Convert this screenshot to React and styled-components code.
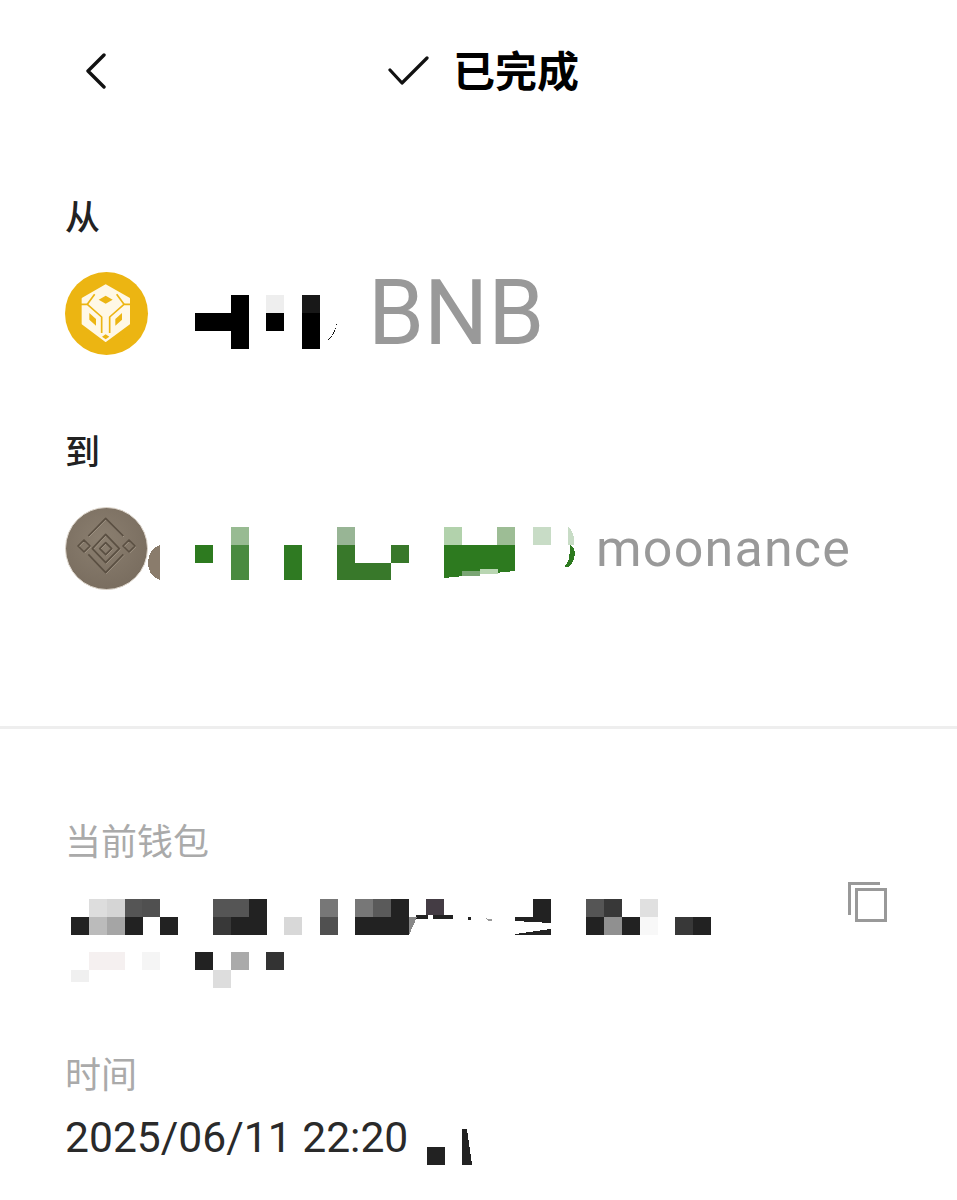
import React from 'react';
import styled, { createGlobalStyle } from 'styled-components';

const CJK = '"Roboto", "Noto Sans CJK SC", sans-serif';

const GlobalStyle = createGlobalStyle`
  html, body {
    margin: 0;
    padding: 0;
    background: #fff;
    font-family: ${CJK};
  }
`;

const Page = styled.div`
  width: 957px;
  height: 1200px;
  overflow: hidden;
  background: #fff;
`;

const Header = styled.header`
  display: flex;
  align-items: center;
  height: 34px;
  padding: 54px 0 0 85px;
`;

const Title = styled.div`
  display: flex;
  align-items: center;
  gap: 24px;
  margin-left: 281px;
  font-size: 42px;
  line-height: 50px;
  font-weight: 700;
  color: #000;
`;

const TitleText = styled.span`
  margin-top: 4px;
`;

const TopSection = styled.section`
  padding: 106px 0 0 65px;
  height: 638px;
  box-sizing: border-box;
`;

const Label = styled.div`
  font-size: 35px;
  line-height: 50px;
  font-weight: 500;
  color: #222;
`;

const Party = styled.div`
  display: flex;
  align-items: center;
  height: 84px;
  margin-top: ${p => p.$top}px;
  margin-bottom: ${p => p.$bottom}px;
`;

const Name = styled.span`
  font-size: ${p => p.$size}px;
  letter-spacing: ${p => p.$spacing || 0}px;
  color: #999;
  margin-left: ${p => p.$gap}px;
  line-height: 1;
`;

const Divider = styled.hr`
  margin: 0;
  border: 0;
  height: 3px;
  background: #eeeeee;
`;

const Details = styled.section`
  padding: 89px 0 0 65px;
`;

const MutedLabel = styled.div`
  font-size: 36px;
  line-height: 50px;
  color: #aaa;
`;

const WalletRow = styled.div`
  display: flex;
  align-items: flex-start;
  margin-top: 31px;
  height: 152px;
`;

const Copy = styled.svg`
  margin: -18px 0 0 136px;
  flex: none;
`;

const TimeRow = styled.div`
  display: flex;
  align-items: center;
  height: 50px;
  margin-top: 11px;
  font-size: 42.6px;
  color: #2a2a2a;
`;

const Mosaic = styled.svg`
  display: block;
  flex: none;
  margin-left: ${p => p.$left || 0}px;
  margin-top: ${p => p.$top || 0}px;
`;

const Avatar = styled.svg`
  display: block;
  flex: none;
`;

const fromCells = [
  [195, 313, 36, 18, '#000'],
  [231, 295, 18, 54, '#000'],
  [266, 295, 18, 18, '#eee'],
  [266, 313, 18, 18, '#000'],
  [302, 295, 18, 18, '#181818'],
  [302, 313, 18, 36, '#000'],
];

const toCells = [
  [195, 544, 18, 18, '#2d7a1f'],
  [231, 526, 18, 18, '#98bb92'],
  [231, 544, 18, 35, '#4a8a40'],
  [284, 544, 18, 35, '#2f7a22'],
  [337, 526, 18, 18, '#98b595'],
  [337, 544, 18, 18, '#38782a'],
  [337, 562, 54, 17, '#38782a'],
  [391, 544, 18, 18, '#38782a'],
  [444, 526, 18, 18, '#b2d2ac'],
  [497, 526, 18, 18, '#9dbd95'],
  [444, 544, 71, 18, '#2d7a1f'],
  [533, 526, 18, 18, '#c8dcc6'],
];

const walletCells = [
  [89, 899, 18, 18, '#ddd'], [107, 899, 18, 18, '#d5d5d5'], [125, 899, 18, 18, '#555'], [142, 899, 18, 18, '#505050'],
  [71, 917, 18, 18, '#222'], [89, 917, 18, 18, '#bbb'], [107, 917, 18, 18, '#a5a5a5'], [125, 917, 18, 18, '#222'], [160, 917, 18, 18, '#222'],
  [213, 899, 36, 18, '#555'], [249, 899, 18, 18, '#222'], [213, 917, 18, 18, '#383838'], [231, 917, 36, 18, '#222'],
  [284, 917, 18, 18, '#d8d8d8'],
  [320, 899, 18, 18, '#777'], [320, 917, 18, 18, '#505050'],
  [355, 899, 18, 18, '#777'], [373, 899, 18, 18, '#5a5a5a'], [391, 899, 18, 18, '#222'], [355, 917, 54, 18, '#222'],
  [426, 899, 18, 16, '#443c44'], [416, 915, 12, 4, '#222'], [433, 915, 20, 4, '#222'], [468, 917, 3, 3, '#222'],
  [533, 899, 18, 18, '#222'],
  [586, 899, 18, 18, '#555'], [604, 899, 18, 18, '#383838'], [640, 899, 18, 18, '#e0e0e0'],
  [586, 917, 18, 18, '#222'], [604, 917, 18, 18, '#909090'], [622, 917, 18, 18, '#222'], [640, 917, 18, 18, '#f8f8f8'],
  [675, 917, 18, 18, '#383838'], [693, 917, 18, 18, '#222'],
  [89, 952, 36, 18, '#f5f0f0'], [71, 970, 18, 12, '#f0f0f0'], [142, 952, 18, 18, '#f5f5f5'],
  [195, 952, 18, 18, '#222'], [231, 952, 18, 18, '#aaa'], [266, 952, 18, 18, '#333'], [213, 970, 18, 18, '#ddd'],
];

// cells are kept in page coordinates, the box only shifts them back to its own origin
const MosaicBlock = ({ x, y, w, h, cells, left, top, children }) => (
  <Mosaic $left={left} $top={top} width={w} height={h} viewBox={`${x} ${y} ${w} ${h}`} shapeRendering="crispEdges">
    {cells.map(([cx, cy, cw, ch, fill]) => (
      <rect key={`${cx}-${cy}`} x={cx} y={cy} width={cw} height={ch} fill={fill} />
    ))}
    {children}
  </Mosaic>
);

const BackIcon = () => (
  <svg width="22" height="36" viewBox="0 0 22 36" fill="none" stroke="#111" strokeWidth="3.4" strokeLinecap="round" strokeLinejoin="round">
    <path d="M19 2 3 18l16 16" />
  </svg>
);

const CheckIcon = () => (
  <svg width="41" height="30" viewBox="0 0 41 30" fill="none" stroke="#111" strokeWidth="3.2" strokeLinecap="round" strokeLinejoin="round">
    <path d="M2 14 14 27 39 2" />
  </svg>
);

const CopyIcon = () => (
  <Copy width="46" height="46" viewBox="0 0 46 46" fill="none" stroke="#999" strokeWidth="3">
    <rect x="9.5" y="8.5" width="29" height="31" />
    <path d="M2.5 34V2.5H33" />
  </Copy>
);

// drawn in the 3x coordinates of the zoomed crop
const BnbIcon = () => (
  <Avatar width="84" height="84" viewBox="15 15 252 252">
    <circle cx="139.5" cy="139.5" r="124.5" fill="#ecb512" />
    <path d="M137 55 207 95V170L137 222 68 170V95z" fill="#fff8e6" strokeLinejoin="round" stroke="#fff8e6" strokeWidth="6" />
    <g fill="none" stroke="#ecb512" strokeWidth="5" strokeLinejoin="round">
      <path d="M62 112 82 112 125 150V198M212 112 192 112 149 150V198" />
      <path d="M82 112 104 82M192 112 170 82" />
    </g>
    <g fill="#ecb512">
      <path d="M137 86 158 98 137 110 116 98z" />
      <path d="M88 138 108 156V176L88 158z" />
      <path d="M186 138 166 156V176L186 158z" />
      <path d="M137 202 148 209 137 217 126 209z" />
      <path d="M62 176 108 212 84 214zM212 176 166 212 190 214z" />
    </g>
  </Avatar>
);

const CoinIcon = () => (
  <Avatar width="84" height="84" viewBox="15 18 252 252">
    <defs>
      <radialGradient id="coin" cx="45%" cy="40%" r="65%">
        <stop offset="0" stopColor="#8b7f70" />
        <stop offset="1" stopColor="#786c5e" />
      </radialGradient>
    </defs>
    <circle cx="139.5" cy="142.5" r="123" fill="url(#coin)" stroke="#ddd6cc" strokeWidth="3" />
    <g fill="none" strokeLinejoin="round" stroke="#a69a8a" strokeWidth="3" transform="translate(2 3)">
      <path d="M85 105 137 52 190 105M85 160 137 215 190 160" />
      <path d="M137 100 178 143 137 185 97 143z" />
      <path d="M137 125 155 143 137 161 119 143z" />
      <path d="M72 117 90 135 72 153 54 135zM207 117 225 135 207 153 189 135z" />
    </g>
    <g fill="none" strokeLinejoin="round" stroke="#5a4f42" strokeWidth="5">
      <path d="M85 105 137 52 190 105M85 160 137 215 190 160" />
      <path d="M137 100 178 143 137 185 97 143z" />
      <path d="M137 125 155 143 137 161 119 143z" />
      <path d="M72 117 90 135 72 153 54 135zM207 117 225 135 207 153 189 135z" />
    </g>
  </Avatar>
);

export default function App() {
  return (
    <Page>
      <GlobalStyle />
      <Header>
        <BackIcon />
        <Title>
          <CheckIcon />
          <TitleText>已完成</TitleText>
        </Title>
      </Header>

      <TopSection>
        <Label>从</Label>
        <Party $top={28} $bottom={73}>
          <BnbIcon />
          <MosaicBlock x={195} y={295} w={145} h={54} left={46} top={16} cells={fromCells}>
            <path d="M337 322c-1 6-4 13-9 18 5-3 8-9 9-18z" fill="#111" />
          </MosaicBlock>
          <Name $size={90} $gap={28}>BNB</Name>
        </Party>
        <Label>到</Label>
        <Party $top={28} $bottom={0}>
          <CoinIcon />
          <MosaicBlock x={148} y={526} w={432} h={54} left={-1} top={10} cells={toCells}>
            <path d="M148 562c0-9 4-16 12-18v35c-8-2-12-9-12-17z" fill="#8a7c6c" />
            <path d="M444 562h71v8l-71 7z" fill="#2d7a1f" />
            <path d="M462 570h18v5h-18z" fill="#7aa574" />
            <path d="M480 568h18v5h-18z" fill="#b9d6b2" />
            <path d="M568 526c5 3 7 10 6 18h-6z" fill="#c8dcc6" />
            <path d="M570 544c6 2 7 14-1 22-2 1-4 0-5-1 4-1 6-9 6-21z" fill="#2d7a1f" />
          </MosaicBlock>
          <Name $size={52} $spacing={1.2} $gap={16}>moonance</Name>
        </Party>
      </TopSection>

      <Divider />

      <Details>
        <MutedLabel>当前钱包</MutedLabel>
        <WalletRow>
          <MosaicBlock x={71} y={899} w={640} h={90} left={6} cells={walletCells}>
            <path d="M409 917h8l-8 18z" fill="#888" />
            <path d="M515 917h36v6l-36-2z" fill="#222" />
            <path d="M515 934l36-5v6h-36z" fill="#222" />
            <path d="M485 918l9 2-5 1z" fill="#999" />
          </MosaicBlock>
          <CopyIcon />
        </WalletRow>
        <MutedLabel>时间</MutedLabel>
        <TimeRow>
          2025/06/11 22:20
          <MosaicBlock x={427} y={1130} w={46} h={36} left={19} top={20} cells={[[427, 1148, 18, 18, '#222']]}>
            <path d="M462 1166h10l-5-36h-5z" fill="#222" />
          </MosaicBlock>
        </TimeRow>
      </Details>
    </Page>
  );
}
